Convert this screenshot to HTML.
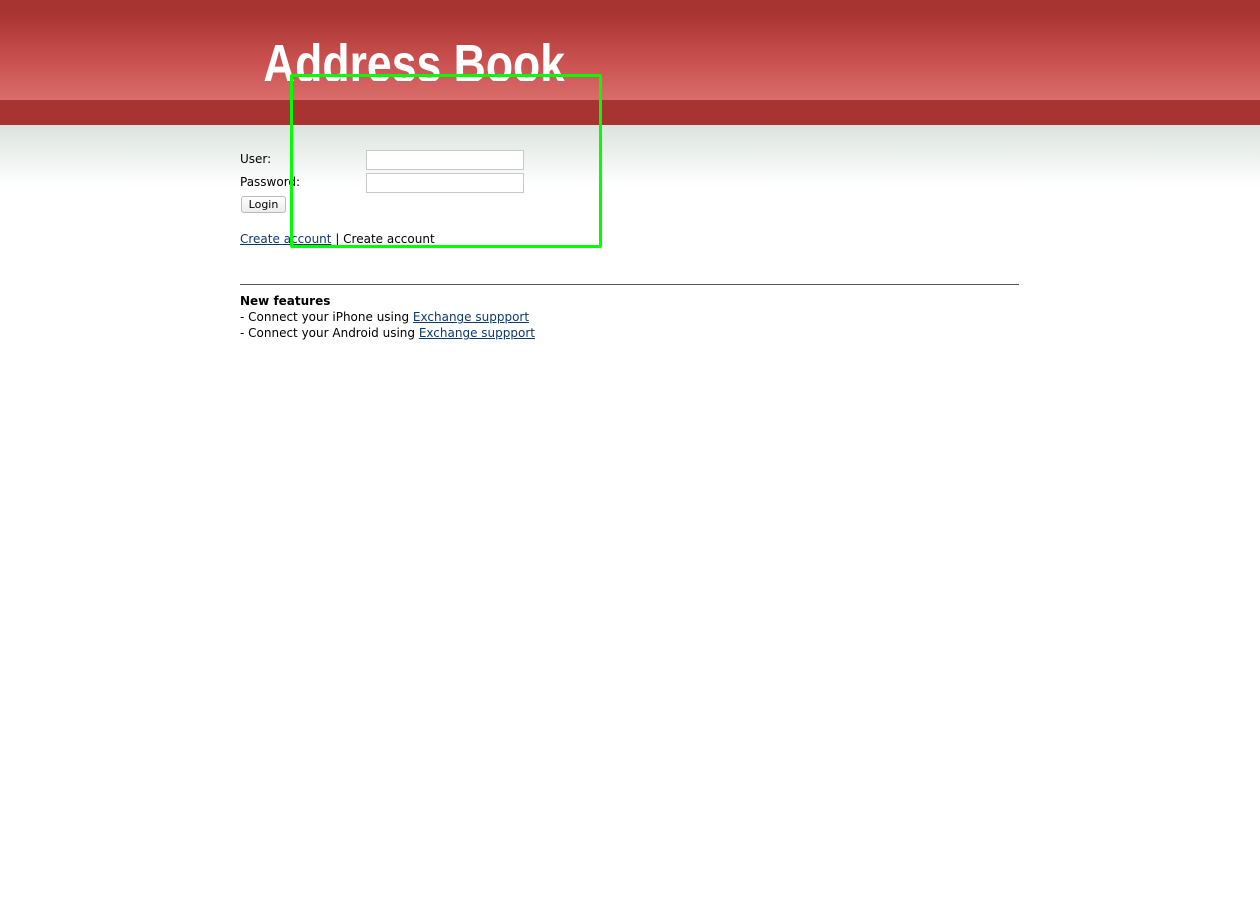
<!DOCTYPE html>
<html><head><style>
body{margin:0;width:1260px;height:902px;background:#fff;font-family:"DejaVu Sans","Liberation Sans",sans-serif;font-size:12px;color:#000;position:relative;overflow:hidden}
#hdr{position:absolute;left:0;top:0;width:1260px;height:100px;background:linear-gradient(#a83432 0px,#a93533 15px,#c9504e 60px,#d96d6b 100px)}
#band{position:absolute;left:0;top:100px;width:1260px;height:25px;background:#a83432}
#grad{position:absolute;left:0;top:125px;width:1260px;height:62px;background:linear-gradient(#dbe3de,#fff)}
#logo{position:absolute;left:263px;top:0;height:81px;overflow:hidden;width:305px}
#logo span{position:absolute;left:0;top:37px;white-space:nowrap;font-family:"Liberation Sans",sans-serif;font-weight:bold;font-size:54px;line-height:54px;color:#fff;transform:scaleX(0.825);transform-origin:left}
.t{position:absolute}
.inp{position:absolute;left:366px;width:156px;height:18px;border:1px solid #c8c8c8;background:#fff}
a{color:#0a3a6e;text-decoration:underline}
#btn{position:absolute;left:241px;top:196px;width:43px;height:15px;border:1px solid #bbb;border-radius:3px;background:linear-gradient(#fff,#ececec);font-size:11px;text-align:center;line-height:15px}
#hr{position:absolute;left:240px;top:284px;width:779px;height:1px;background:#555}
#green{position:absolute;left:290px;top:74px;width:306px;height:168px;border:3px solid #0f0;border-radius:2px}
</style></head><body>
<div id="hdr"></div><div id="band"></div><div id="grad"></div>
<div id="logo"><span>Address Book</span></div>
<div class="t" style="left:240px;top:152px">User:</div>
<div class="t" style="left:240px;top:175px">Password:</div>
<div class="inp" style="top:150px"></div>
<div class="inp" style="top:173px"></div>
<div id="btn">Login</div>
<div class="t" style="left:240px;top:232px"><a>Create account</a> | Create account</div>
<div id="hr"></div>
<div class="t" style="left:240px;top:293px;line-height:16px"><b>New features</b><br>- Connect your iPhone using <a>Exchange suppport</a><br>- Connect your Android using <a>Exchange suppport</a></div>
<div id="green"></div>
</body></html>
